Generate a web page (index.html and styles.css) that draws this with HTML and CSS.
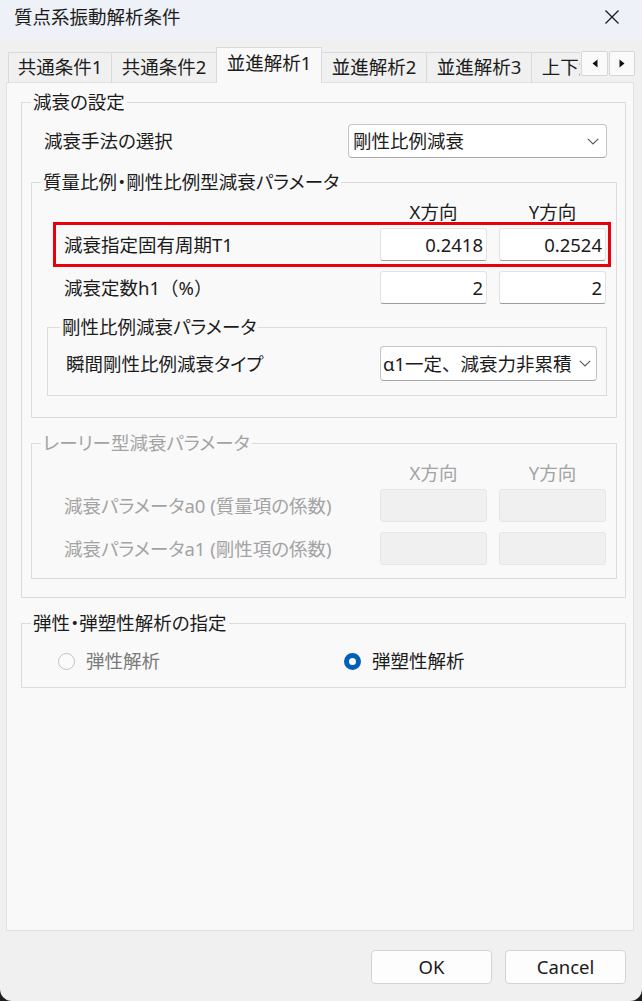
FILE: index.html
```html
<!DOCTYPE html>
<html lang="ja">
<head>
<meta charset="utf-8">
<title>質点系振動解析条件</title>
<link rel="stylesheet" href="styles.css">
</head>
<body>
<div class="window">
  <div class="titlebar">
    <span class="title">質点系振動解析条件</span>
    <svg class="close" width="16" height="16" viewBox="0 0 16 16"><path d="M1.5 1.5L14.5 14.5M14.5 1.5L1.5 14.5"/></svg>
  </div>
  <div class="tabstrip">
    <div class="tabs">
      <div class="tab">共通条件1</div>
      <div class="tab">共通条件2</div>
      <div class="tab active">並進解析1</div>
      <div class="tab">並進解析2</div>
      <div class="tab">並進解析3</div>
      <div class="tab">上下解析1</div>
    </div>
    <div class="spin">
      <div class="spin-btn"><svg width="6" height="9" viewBox="0 0 6 9"><path d="M5.5 0.5L0.5 4.5L5.5 8.5Z"/></svg></div>
      <div class="spin-btn"><svg width="6" height="9" viewBox="0 0 6 9"><path d="M0.5 0.5L5.5 4.5L0.5 8.5Z"/></svg></div>
    </div>
  </div>
  <div class="panel">
    <div class="group g-main">
      <div class="legend">減衰の設定</div>
      <div class="row-select r-method">
        <span>減衰手法の選択</span>
        <div class="select s-method"><span class="select-text">剛性比例減衰</span><svg class="chev" width="12" height="7" viewBox="0 0 12 7"><path d="M0.8 0.8L6 6L11.2 0.8"/></svg></div>
      </div>
      <div class="group g-sub">
        <div class="legend">質量比例・剛性比例型減衰パラメータ</div>
        <div class="grid-row head"><span></span><span>X方向</span><span>Y方向</span></div>
        <div class="grid-row highlight"><span class="lbl">減衰指定固有周期T1</span><div class="input">0.2418</div><div class="input">0.2524</div></div>
        <div class="grid-row"><span class="lbl">減衰定数h1<span class="fw">（%）</span></span><div class="input">2</div><div class="input">2</div></div>
        <div class="group g-inner">
          <div class="legend">剛性比例減衰パラメータ</div>
          <div class="row-select r-inner">
            <span>瞬間剛性比例減衰タイプ</span>
            <div class="select s-type"><span class="select-text">α1一定、減衰力非累積</span><svg class="chev" width="12" height="7" viewBox="0 0 12 7"><path d="M0.8 0.8L6 6L11.2 0.8"/></svg></div>
          </div>
        </div>
      </div>
      <div class="group g-sub g-ray disabled">
        <div class="legend">レーリー型減衰パラメータ</div>
        <div class="grid-row head"><span></span><span>X方向</span><span>Y方向</span></div>
        <div class="grid-row"><span class="lbl">減衰パラメータa0 (質量項の係数)</span><div class="input off"></div><div class="input off"></div></div>
        <div class="grid-row"><span class="lbl">減衰パラメータa1 (剛性項の係数)</span><div class="input off"></div><div class="input off"></div></div>
      </div>
    </div>
    <div class="group g-mode">
      <div class="legend">弾性・弾塑性解析の指定</div>
      <div class="radios">
        <div class="radio-item first"><span class="radio"></span><span class="radio-label dim">弾性解析</span></div>
        <div class="radio-item"><span class="radio checked"></span><span class="radio-label">弾塑性解析</span></div>
      </div>
    </div>
  </div>
  <div class="buttons">
    <div class="btn">OK</div>
    <div class="btn">Cancel</div>
  </div>
</div>
</body>
</html>
```

FILE: styles.css
```css
* { box-sizing: border-box; }
html, body { margin: 0; padding: 0; }
body {
  width: 642px;
  height: 1001px;
  overflow: hidden;
  background: #1e1e1e;
  font-family: "Noto Sans", "Noto Sans CJK JP", sans-serif;
  font-size: 18.5px;
  line-height: 22px;
  color: #1b1b1b;
  font-feature-settings: "palt";
}
.window {
  width: 642px;
  height: 1001px;
  background: #f0f0f0;
  border-radius: 0 0 12px 12px;
  display: flex;
  flex-direction: column;
}
.titlebar {
  height: 40px;
  flex: none;
  background: #eef1f8;
  display: flex;
  align-items: flex-start;
  justify-content: space-between;
  padding: 6px 22px 0 14px;
}
.close { margin-top: 3px; }
.close path { stroke: #1b1b1b; stroke-width: 1.3; fill: none; }

.tabstrip {
  height: 43px;
  flex: none;
  display: flex;
  align-items: flex-end;
  padding-left: 8px;
  position: relative;
  z-index: 1;
}
.tabs {
  display: flex;
  align-items: flex-end;
  width: 572px;
  height: 37px;
  overflow: hidden;
}
.tab {
  flex: none;
  width: 106px;
  height: 30px;
  margin-left: -1px;
  margin-bottom: 1px;
  border: 1px solid #d9d9d9;
  border-bottom: none;
  background: #f0f0f0;
  text-align: center;
  line-height: 28px;
  white-space: nowrap;
}
.tab:first-child { margin-left: 0; width: 104px; }
.tab.active {
  height: 36px;
  margin-bottom: 0;
  background: #f9f9f9;
  line-height: 30px;
}
.spin {
  display: flex;
  gap: 1px;
  margin-left: 1px;
  margin-bottom: 7px;
}
.spin-btn {
  width: 27px;
  height: 25px;
  border: 1px solid #d6d6d6;
  border-radius: 2px;
  background: #fafafa;
  display: flex;
  align-items: center;
  justify-content: center;
}
.spin-btn:last-child { width: 26px; }
.spin-btn path { fill: #111; }

.panel {
  flex: none;
  margin: -1px 0 0 6px;
  width: 628px;
  height: 849px;
  background: #f9f9f9;
  border: 1px solid #e1e1e1;
}

.group {
  border: 1px solid #dcdcdc;
}
.legend {
  display: block;
  width: max-content;
  margin: -12px 0 0 9px;
  padding: 0 2px;
  background: #f9f9f9;
  line-height: 22px;
  white-space: nowrap;
}
.g-main {
  margin: 19px 0 0 14px;
  width: 605px;
  padding-bottom: 18px;
}
.row-select {
  display: flex;
  align-items: center;
  justify-content: space-between;
}
.r-method {
  margin-top: 11px;
  padding: 0 18px 0 22px;
}
.select {
  display: flex;
  align-items: center;
  justify-content: space-between;
  background: #fff;
  border: 1px solid #c4c4c4;
  border-bottom-color: #a8a8a8;
  border-radius: 4px;
  white-space: nowrap;
  overflow: hidden;
}
.s-method {
  width: 259px;
  height: 34px;
  padding: 0 7px 0 4px;
}
.s-type {
  width: 217px;
  height: 35px;
  padding: 0 5px 0 2px;
  font-feature-settings: normal;
}
.chev { flex: none; }
.chev path { stroke: #5e5e5e; stroke-width: 1.2; fill: none; }

.g-sub {
  margin: 24px 0 0 9px;
  width: 586px;
  padding-bottom: 21px;
}
.grid-row {
  display: grid;
  grid-template-columns: 1fr 107px 107px;
  column-gap: 12px;
  align-items: center;
  margin: 4px 0 0 24px;
  width: 552px;
  height: 39px;
  padding: 0 2px 0 8px;
}
.grid-row.head {
  margin-top: 8px;
  height: 22px;
  text-align: center;
}
.grid-row.head + .grid-row { margin-top: 2px; }
.highlight { outline: 3px solid #e8000b; }
.lbl { white-space: nowrap; }
.fw { font-feature-settings: normal; }
.input {
  height: 33px;
  background: #fff;
  border: 1px solid #e2e2e2;
  border-bottom-color: #9c9c9c;
  border-radius: 3px;
  text-align: right;
  padding-right: 3px;
  line-height: 31px;
}
.input.off {
  background: #f0f0f0;
  border-color: #e6e6e6;
}
.g-inner {
  margin: 20px 0 0 15px;
  width: 560px;
  padding-bottom: 14px;
}
.g-inner .legend { margin-left: 12px; }
.r-inner {
  margin-top: 8px;
  padding: 0 9px 0 18px;
}
.g-ray {
  margin-top: 25px;
  padding-bottom: 10px;
}
.disabled { color: #a3a3a3; }

.g-mode {
  margin: 25px 0 0 14px;
  width: 605px;
  padding-bottom: 15px;
}
.radios {
  display: flex;
  align-items: center;
  margin-top: 16px;
  height: 22px;
  padding-left: 36px;
}
.radio-item {
  display: flex;
  align-items: center;
  gap: 11px;
}
.radio-item.first { width: 286px; }
.radio {
  flex: none;
  width: 17px;
  height: 17px;
  border-radius: 50%;
  border: 1px solid #c2c2c2;
  background: #fbfbfb;
}
.radio.checked {
  border: 5px solid #005fb8;
  background: #fff;
}
.radio-label.dim { color: #7a7a7a; }

.buttons {
  display: flex;
  justify-content: flex-end;
  gap: 13px;
  padding-right: 16px;
  margin-top: 19px;
}
.btn {
  width: 121px;
  height: 34px;
  background: #fdfdfd;
  border: 1px solid #d3d3d3;
  border-radius: 4px;
  text-align: center;
  line-height: 32px;
}
```
